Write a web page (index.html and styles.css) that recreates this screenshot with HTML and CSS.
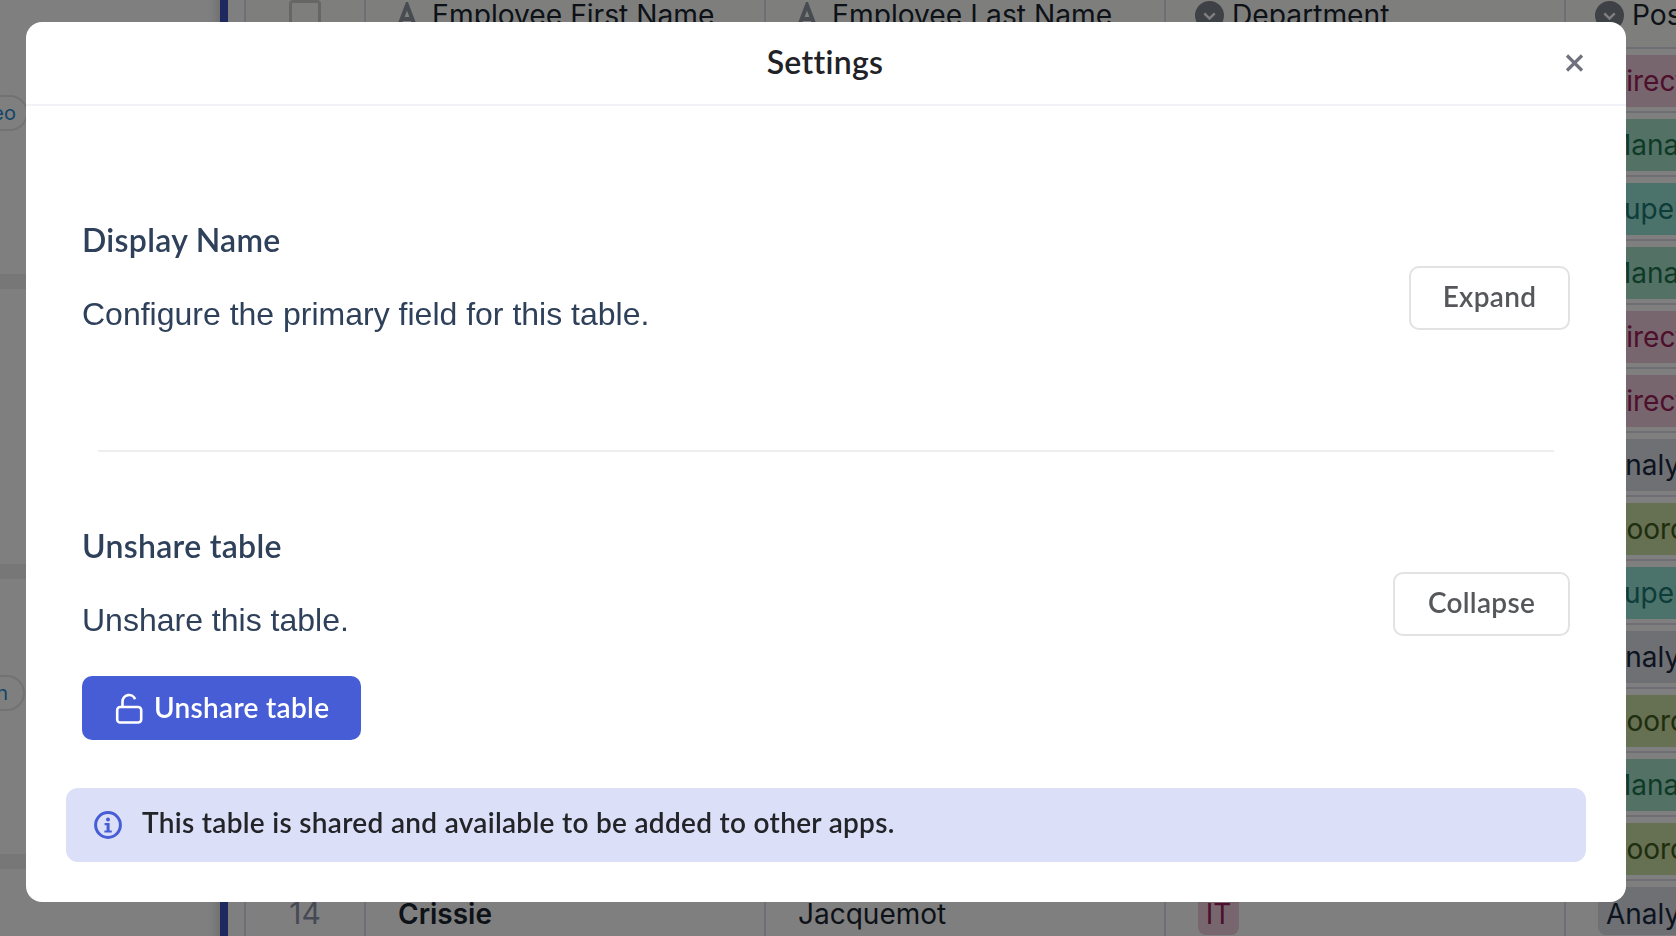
FILE: index.html
```html
<!DOCTYPE html>
<html lang="en">
<head>
<meta charset="utf-8">
<title>Settings</title>
<link rel="stylesheet" href="styles.css">
</head>
<body>
<div class="app">
  <aside class="side">
    <div class="side-card side-card-first"><span class="pill pill-a">Video</span></div>
    <div class="side-card"></div>
    <div class="side-card"></div>
    <span class="pill pill-b">Add column</span>
  </aside>
  <div class="strip"></div>
  <div class="grid">
    <div class="row head">
      <div class="cell num"><span class="check"></span></div>
      <div class="cell wide"><svg class="ic-a" viewBox="0 0 22 26"><path d="M3 24 11 3l8 21M6.5 17h9" fill="none" stroke="#9096a0" stroke-width="4"/></svg>Employee First Name</div>
      <div class="cell wide"><svg class="ic-a" viewBox="0 0 22 26"><path d="M3 24 11 3l8 21M6.5 17h9" fill="none" stroke="#9096a0" stroke-width="4"/></svg>Employee Last Name</div>
      <div class="cell wide"><svg class="ic-c" viewBox="0 0 28 28"><circle cx="14" cy="14" r="14" fill="#7d828c"/><path d="m9 12 5 5 5-5" fill="none" stroke="#fff" stroke-width="2.4"/></svg>Department</div>
      <div class="cell last"><svg class="ic-c" viewBox="0 0 28 28"><circle cx="14" cy="14" r="14" fill="#7d828c"/><path d="m9 12 5 5 5-5" fill="none" stroke="#fff" stroke-width="2.4"/></svg>Position</div>
    </div>
    <div class="row"><div class="cell num"></div><div class="cell wide"></div><div class="cell wide"></div><div class="cell wide"></div><div class="cell last"><span class="tag dir">Director</span></div></div>
    <div class="row"><div class="cell num"></div><div class="cell wide"></div><div class="cell wide"></div><div class="cell wide"></div><div class="cell last"><span class="tag man">Manager</span></div></div>
    <div class="row"><div class="cell num"></div><div class="cell wide"></div><div class="cell wide"></div><div class="cell wide"></div><div class="cell last"><span class="tag sup">Supervisor</span></div></div>
    <div class="row"><div class="cell num"></div><div class="cell wide"></div><div class="cell wide"></div><div class="cell wide"></div><div class="cell last"><span class="tag man">Manager</span></div></div>
    <div class="row"><div class="cell num"></div><div class="cell wide"></div><div class="cell wide"></div><div class="cell wide"></div><div class="cell last"><span class="tag dir">Director</span></div></div>
    <div class="row"><div class="cell num"></div><div class="cell wide"></div><div class="cell wide"></div><div class="cell wide"></div><div class="cell last"><span class="tag dir">Director</span></div></div>
    <div class="row"><div class="cell num"></div><div class="cell wide"></div><div class="cell wide"></div><div class="cell wide"></div><div class="cell last"><span class="tag ana">Analyst</span></div></div>
    <div class="row"><div class="cell num"></div><div class="cell wide"></div><div class="cell wide"></div><div class="cell wide"></div><div class="cell last"><span class="tag coo">Coordinator</span></div></div>
    <div class="row"><div class="cell num"></div><div class="cell wide"></div><div class="cell wide"></div><div class="cell wide"></div><div class="cell last"><span class="tag sup">Supervisor</span></div></div>
    <div class="row"><div class="cell num"></div><div class="cell wide"></div><div class="cell wide"></div><div class="cell wide"></div><div class="cell last"><span class="tag ana">Analyst</span></div></div>
    <div class="row"><div class="cell num"></div><div class="cell wide"></div><div class="cell wide"></div><div class="cell wide"></div><div class="cell last"><span class="tag coo">Coordinator</span></div></div>
    <div class="row"><div class="cell num"></div><div class="cell wide"></div><div class="cell wide"></div><div class="cell wide"></div><div class="cell last"><span class="tag man">Manager</span></div></div>
    <div class="row"><div class="cell num"></div><div class="cell wide"></div><div class="cell wide"></div><div class="cell wide"></div><div class="cell last"><span class="tag coo">Coordinator</span></div></div>
    <div class="row row-end"><div class="cell num"><span class="index">14</span></div><div class="cell wide"><strong class="first">Crissie</strong></div><div class="cell wide"><span class="end-text">Jacquemot</span></div><div class="cell wide"><span class="tag dir tag-it">IT</span></div><div class="cell last"><span class="tag ana">Analyst</span></div></div>
  </div>
</div>
<div class="backdrop"></div>
<section class="modal">
  <header class="modal-head">
    <h1 class="modal-title">Settings</h1>
    <button class="close" aria-label="Close"><svg viewBox="0 0 19 18" width="19" height="18"><path d="M2 1.5l15 15M17 1.5l-15 15" stroke="#6f717e" stroke-width="3.2" fill="none"/></svg></button>
  </header>
  <div class="modal-body">
    <div class="setting">
      <div class="setting-copy">
        <h2 class="setting-title">Display Name</h2>
        <p class="setting-desc">Configure the primary field for this table.</p>
      </div>
      <button class="btn-outline btn-expand">Expand</button>
    </div>
    <hr class="rule">
    <div class="setting">
      <div class="setting-copy">
        <h2 class="setting-title">Unshare table</h2>
        <p class="setting-desc">Unshare this table.</p>
      </div>
      <button class="btn-outline btn-collapse">Collapse</button>
    </div>
    <button class="btn-primary">
      <svg viewBox="0 0 28 31" width="28" height="31"><rect x="2.2" y="14" width="24" height="15.5" rx="3" fill="none" stroke="#fff" stroke-width="2.6"/><path d="M7.5 14V8.5a6.5 6.5 0 0 1 12.6-2.2" fill="none" stroke="#fff" stroke-width="2.6"/></svg>
      <span class="btn-label">Unshare table</span>
    </button>
  </div>
  <div class="notice">
    <svg viewBox="0 0 28 28" width="28" height="28"><circle cx="14" cy="14" r="12.4" fill="none" stroke="#475dd6" stroke-width="3"/><circle cx="14" cy="8.4" r="2" fill="#475dd6"/><path d="M10.6 12h5v7.4h2.2v2.2h-7.4v-2.2h2.2v-5.2h-2z" fill="#475dd6"/></svg>
    <span class="notice-text">This table is shared and available to be added to other apps.</span>
  </div>
</section>
</body>
</html>
```
FILE: styles.css
```css
* { box-sizing: border-box; }
html, body { margin: 0; height: 100%; overflow: hidden; }
body { background: #fff; font-family: "Inter", "Liberation Sans", sans-serif; color: #1a2430; }

.app { display: flex; height: 936px; overflow: hidden; }
.side { width: 220px; flex: none; position: relative; display: flex; flex-direction: column; box-shadow: inset -14px 0 12px -12px rgba(0,0,0,.18); }
.side-card { height: 290px; border-bottom: 15px solid #eee; flex: none; }
.side-card-first { height: 289px; }
.pill { position: absolute; height: 36px; padding: 0 10px; border: 2px solid #e4e4e4; border-radius: 18px; font-size: 20px; line-height: 32px; color: #2a8ad0; white-space: nowrap; }
.pill-a { top: 95px; right: 192px; }
.pill-b { top: 675px; right: 195px; padding-right: 15px; }
.strip { width: 8px; background: #3f53bf; flex: none; }
.grid { flex: none; margin-top: -15px; margin-left: 16px; display: flex; flex-direction: column; }
.row { display: flex; height: 64px; flex: none; border-bottom: 2px solid #dcdce8; }
.row.head { background: #fdfffb; }
.cell { display: flex; flex: none; align-items: center; border-right: 2px solid #dcdce8; font-size: 28px; white-space: nowrap; padding: 0 0 0 32px; }
.num { width: 122px; justify-content: center; padding: 0; border-left: 2px solid #dcdce8; }
.wide { width: 400px; }
.last { border-right: 0; padding-left: 0; width: 110px; overflow: hidden; }
.head .cell { align-items: flex-start; padding-top: 13px; font-size: 28.2px; }
.head .wide { padding-left: 30px; }
.head .num { padding-top: 15px; }
.head .last { padding-left: 30px; overflow: visible; }
.check { display: block; width: 32px; height: 32px; border: 3px solid #ccc; border-radius: 4px; }
.ic-a { width: 22px; height: 26px; margin: 4px 14px 0 0; flex: none; }
.ic-c { width: 29px; height: 29px; margin: 3px 8px 0 -1px; flex: none; }
.index { color: #8a94aa; font-size: 30px; margin-top: 2px; }
.first, .end-text { margin-top: 4px; }
.first { font-weight: 600; }
.tag { display: block; height: 52px; line-height: 52px; padding: 0 8px; border-radius: 8px; margin: 2px 0 0 32px; white-space: nowrap; }
.tag-it { margin-left: 0; width: 41px; padding: 0; text-align: center; }
.row-end .tag { height: 48px; margin-top: -2px; line-height: 54px; }
.dir { background: #eeccdc; color: #9a1e58; }
.man { background: #a6e4ca; color: #1e7450; }
.sup { background: #98e4d8; color: #1c7870; }
.ana { background: #dce0e6; color: #1a2840; }
.coo { background: #cce0a4; color: #3c5c1c; }

.backdrop { position: fixed; inset: 0; background: rgba(0,0,0,.5); }

.modal { position: fixed; left: 26px; top: 22px; width: 1600px; height: 880px; background: #fff; border-radius: 16px; display: flex; flex-direction: column; font-family: "Lato", "Liberation Sans", sans-serif; font-variant-ligatures: none; }
.modal-head { height: 84px; flex: none; display: grid; grid-template-columns: 1fr auto 1fr; align-items: center; border-bottom: 2px solid #f3f2f9; padding: 0 44px 2px 42px; }
.modal-title { grid-column: 2; margin: 0; font-size: 32px; letter-spacing: .3px; font-weight: 600; color: #1f2226; line-height: 40px; }
.close { grid-column: 3; justify-self: end; border: 0; padding: 0; margin: 1px -2px 0 0; background: none; height: 18px; display: flex; }
.modal-body { flex: 1; padding: 118px 56px 0; display: flex; flex-direction: column; align-items: flex-start; }
.setting { display: flex; align-items: center; justify-content: space-between; width: 100%; }
.setting-title { margin: 0 0 35px; font-size: 32px; letter-spacing: .3px; line-height: 32px; font-weight: 600; color: #2e405a; }
.setting-desc { margin: 0 0 35px; font-family: "Liberation Sans", Arial, sans-serif; font-size: 32px; letter-spacing: 0; line-height: 46px; color: #2e405a; }
.btn-outline { height: 64px; background: #fff; border: 2px solid #e2e2e2; border-radius: 10px; font: 600 28px "Lato", sans-serif; font-variant-ligatures: none; letter-spacing: .3px; color: #55575a; padding: 0 0 4px; }
.btn-expand { width: 161px; }
.btn-collapse { width: 177px; }
.rule { align-self: stretch; height: 2px; border: 0; background: #eeeeee; margin: 78px 16px; }
.btn-primary { display: flex; align-items: center; gap: 11px; width: 279px; height: 64px; margin-top: -2px; padding: 0 0 0 33px; background: #475dd6; color: #fff; border: 0; border-radius: 10px; font: 600 28px "Lato", sans-serif; font-variant-ligatures: none; letter-spacing: .3px; line-height: 30px; }
.btn-label { margin-top: -3px; }
.notice { flex: none; margin: 48px 40px 40px; height: 74px; background: #dcdff8; border-radius: 12px; display: flex; align-items: center; gap: 20px; padding-left: 28px; }
.notice-text { font-size: 28px; font-weight: 600; letter-spacing: .3px; color: #222428; margin-top: -6px; }
```
